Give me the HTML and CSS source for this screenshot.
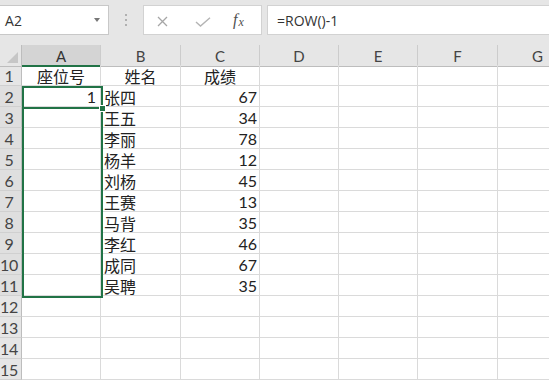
FILE: index.html
```html
<!DOCTYPE html>
<html lang="zh-CN">
<head>
<meta charset="utf-8">
<title>Excel</title>
<link rel="stylesheet" href="styles.css">
</head>
<body>
<div class="toolbar">
  <div class="namebox"><span class="ref">A2</span><span class="caret"></span></div>
  <div class="grip"><i></i><i></i><i></i></div>
  <div class="fxbox">
    <svg class="ico-x" width="11" height="11" viewBox="0 0 11 11"><path d="M1 1L10 10M10 1L1 10" stroke="#a6a6a6" stroke-width="1.3" fill="none"/></svg>
    <svg class="ico-ok" width="16" height="10" viewBox="0 0 16 10"><path d="M1 5L5.5 9L15 0.8" stroke="#b4b4b4" stroke-width="1.4" fill="none"/></svg>
    <span class="fx">f<span class="sx">x</span></span>
  </div>
  <div class="formula">=ROW()-1</div>
</div>

<div class="sheet">
  <div class="row hdr">
    <div class="c ch corner"><span class="tri"></span></div>
    <div class="c ch sel-ch">A</div>
    <div class="c ch">B</div>
    <div class="c ch">C</div>
    <div class="c ch">D</div>
    <div class="c ch">E</div>
    <div class="c ch">F</div>
    <div class="c ch">G</div>
  </div>
  <div class="row">
    <div class="c rh">1</div>
    <div class="c cn center">座位号</div>
    <div class="c cn center">姓名</div>
    <div class="c cn center">成绩</div>
    <div class="c"></div><div class="c"></div><div class="c"></div><div class="c"></div>
  </div>
  <div class="row">
    <div class="c rh sel-rh">2</div>
    <div class="c num first">1</div>
    <div class="c cn">张四</div>
    <div class="c num">67</div>
    <div class="c"></div><div class="c"></div><div class="c"></div><div class="c"></div>
  </div>
  <div class="row">
    <div class="c rh sel-rh">3</div>
    <div class="c"></div>
    <div class="c cn">王五</div>
    <div class="c num">34</div>
    <div class="c"></div><div class="c"></div><div class="c"></div><div class="c"></div>
  </div>
  <div class="row">
    <div class="c rh sel-rh">4</div>
    <div class="c"></div>
    <div class="c cn">李丽</div>
    <div class="c num">78</div>
    <div class="c"></div><div class="c"></div><div class="c"></div><div class="c"></div>
  </div>
  <div class="row">
    <div class="c rh sel-rh">5</div>
    <div class="c"></div>
    <div class="c cn">杨羊</div>
    <div class="c num">12</div>
    <div class="c"></div><div class="c"></div><div class="c"></div><div class="c"></div>
  </div>
  <div class="row">
    <div class="c rh sel-rh">6</div>
    <div class="c"></div>
    <div class="c cn">刘杨</div>
    <div class="c num">45</div>
    <div class="c"></div><div class="c"></div><div class="c"></div><div class="c"></div>
  </div>
  <div class="row">
    <div class="c rh sel-rh">7</div>
    <div class="c"></div>
    <div class="c cn">王赛</div>
    <div class="c num">13</div>
    <div class="c"></div><div class="c"></div><div class="c"></div><div class="c"></div>
  </div>
  <div class="row">
    <div class="c rh sel-rh">8</div>
    <div class="c"></div>
    <div class="c cn">马背</div>
    <div class="c num">35</div>
    <div class="c"></div><div class="c"></div><div class="c"></div><div class="c"></div>
  </div>
  <div class="row">
    <div class="c rh sel-rh">9</div>
    <div class="c"></div>
    <div class="c cn">李红</div>
    <div class="c num">46</div>
    <div class="c"></div><div class="c"></div><div class="c"></div><div class="c"></div>
  </div>
  <div class="row">
    <div class="c rh sel-rh">10</div>
    <div class="c"></div>
    <div class="c cn">成同</div>
    <div class="c num">67</div>
    <div class="c"></div><div class="c"></div><div class="c"></div><div class="c"></div>
  </div>
  <div class="row">
    <div class="c rh sel-rh">11</div>
    <div class="c"></div>
    <div class="c cn">吴聘</div>
    <div class="c num">35</div>
    <div class="c"></div><div class="c"></div><div class="c"></div><div class="c"></div>
  </div>
  <div class="row">
    <div class="c rh">12</div>
    <div class="c"></div><div class="c"></div><div class="c"></div>
    <div class="c"></div><div class="c"></div><div class="c"></div><div class="c"></div>
  </div>
  <div class="row">
    <div class="c rh">13</div>
    <div class="c"></div><div class="c"></div><div class="c"></div>
    <div class="c"></div><div class="c"></div><div class="c"></div><div class="c"></div>
  </div>
  <div class="row">
    <div class="c rh">14</div>
    <div class="c"></div><div class="c"></div><div class="c"></div>
    <div class="c"></div><div class="c"></div><div class="c"></div><div class="c"></div>
  </div>
  <div class="row">
    <div class="c rh">15</div>
    <div class="c"></div><div class="c"></div><div class="c"></div>
    <div class="c"></div><div class="c"></div><div class="c"></div><div class="c"></div>
  </div>

  <div class="range"></div>
  <div class="active"></div>
  <div class="handle"></div>
</div>
</body>
</html>
```

FILE: styles.css
```css
* { box-sizing: border-box; }
html, body {
  margin: 0;
  padding: 0;
  width: 549px;
  height: 382px;
  overflow: hidden;
  background: #ffffff;
}
body {
  font-family: Lato, "Noto Sans CJK SC", sans-serif;
}

/* ---------- formula bar ---------- */
.toolbar {
  height: 45px;
  background: #e6e6e6;
  display: flex;
  align-items: flex-start;
  padding-top: 5px;
  overflow: hidden;
}
.namebox {
  margin-left: -1px;
  width: 110px;
  height: 30px;
  background: #fff;
  border: 1px solid #c8c8c8;
  display: flex;
  align-items: center;
  padding-left: 5px;
  flex-shrink: 0;
}
.ref {
  font-family: "Open Sans", "Liberation Sans", sans-serif;
  font-size: 14px;
  color: #333;
  letter-spacing: 0.2px;
}
.caret {
  margin-left: auto;
  margin-right: 8px;
  width: 0;
  height: 0;
  border-left: 3.5px solid transparent;
  border-right: 3.5px solid transparent;
  border-top: 4px solid #777;
}
.grip {
  width: 34px;
  height: 30px;
  display: flex;
  flex-direction: column;
  align-items: center;
  justify-content: center;
  gap: 3px;
  flex-shrink: 0;
}
.grip i {
  display: block;
  width: 2px;
  height: 2px;
  background: #b0b0b0;
}
.fxbox {
  width: 119px;
  height: 30px;
  background: #fff;
  border: 1px solid #d2d2d2;
  display: flex;
  align-items: center;
  padding-left: 13px;
  flex-shrink: 0;
}
.ico-x { display: block; margin-top: 2px; }
.ico-ok { display: block; margin-left: 27px; margin-top: 3px; }
.fx {
  margin-left: 22px;
  font-family: "Liberation Serif", "DejaVu Serif", serif;
  font-style: italic;
  font-size: 16px;
  color: #505050;
  line-height: 1;
}
.fx .sx {
  font-size: 12px;
  position: relative;
  top: 1px;
  margin-left: 1px;
}
.formula {
  margin-left: 5px;
  flex: 1;
  margin-right: -3px;
  height: 30px;
  background: #fff;
  border: 1px solid #d2d2d2;
  display: flex;
  align-items: center;
  padding-left: 9px;
  font-family: "Open Sans", "Liberation Sans", sans-serif;
  font-size: 14px;
  color: #333;
}

/* ---------- sheet ---------- */
.sheet {
  position: relative;
  width: 549px;
  overflow: hidden;
}
.row {
  display: grid;
  grid-template-columns: 22px 79px 80px 79px 79px 79px 80px 80px;
  height: 21px;
}
.row.hdr {
  height: 20px;
}
.c {
  border-right: 1px solid #dadada;
  border-bottom: 1px solid #dadada;
  display: flex;
  align-items: flex-start;
  padding-top: 2px;
  white-space: nowrap;
  font-family: Lato, "Noto Sans CJK SC", sans-serif;
  font-size: 16px;
  line-height: 18px;
  color: #222;
}
.ch {
  background: #e6e6e6;
  border-right-color: #cccccc;
  border-bottom-color: #bdbdbd;
  justify-content: center;
  font-size: 15px;
  line-height: 17px;
  padding-top: 3px;
  color: #444;
}
.corner {
  position: relative;
  border-right-color: #bdbdbd;
}
.tri {
  position: absolute;
  right: 3px;
  bottom: 3px;
  width: 0;
  height: 0;
  border-left: 11px solid transparent;
  border-bottom: 11px solid #c6c6c6;
}
.sel-ch {
  background: #d4d4d4;
  border-bottom: 2px solid #217346;
  color: #333;
}
.rh {
  background: #e6e6e6;
  border-right-color: #bdbdbd;
  border-bottom-color: #d0d0d0;
  justify-content: center;
  padding-right: 3px;
  letter-spacing: -0.3px;
  color: #444;
}
.sel-rh {
  background: #dfdfdf;
}
.cn {
  font-family: "Noto Sans CJK SC", sans-serif;
  padding-left: 3px;
  color: #222;
}
.center {
  justify-content: center;
  padding-left: 0;
}
.num {
  justify-content: flex-end;
  padding-right: 2px;
}
.num.first {
  padding-right: 4px;
}

/* ---------- selection overlay ---------- */
.range {
  position: absolute;
  left: 22px;
  top: 41px;
  width: 81px;
  height: 212px;
  border: 2px solid #217346;
  pointer-events: none;
}
.active {
  position: absolute;
  left: 22px;
  top: 41px;
  width: 81px;
  height: 23px;
  border: 2px solid #217346;
  pointer-events: none;
}
.handle {
  position: absolute;
  left: 99px;
  top: 60px;
  width: 7px;
  height: 7px;
  background: #217346;
  border: 1px solid #fff;
}
```
